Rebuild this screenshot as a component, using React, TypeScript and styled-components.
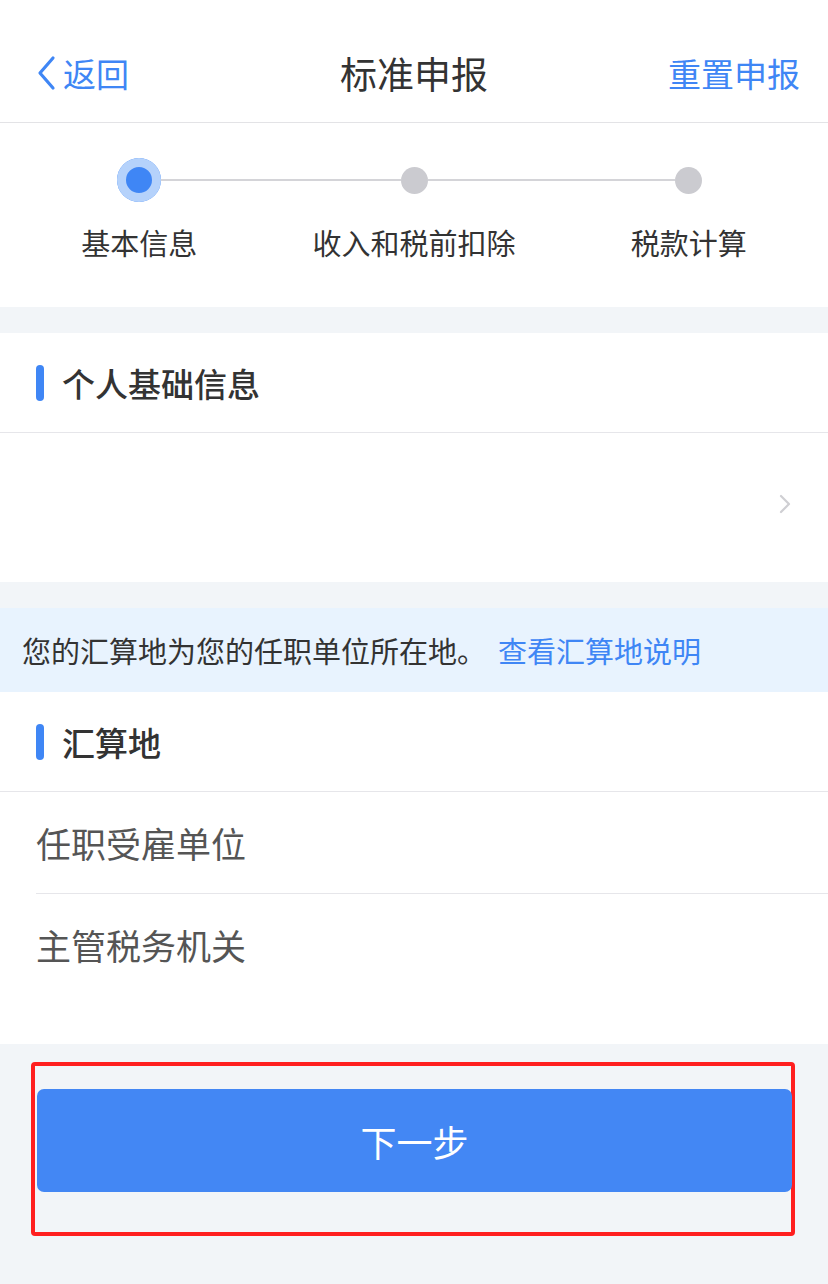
import React from "react";
import styled, { createGlobalStyle } from "styled-components";

const BLUE = "#3f86f5";

const GlobalStyle = createGlobalStyle`
  html, body {
    margin: 0;
    padding: 0;
    background: #f2f5f8;
  }
  body {
    font-family: "Noto Sans CJK SC", "Noto Sans", sans-serif;
    color: #333;
  }
  * {
    box-sizing: border-box;
  }
`;

const STEPS = [
  { id: 1, title: "基本信息", active: true },
  { id: 2, title: "收入和税前扣除", active: false },
  { id: 3, title: "税款计算", active: false },
];

const App = () => {
  return (
    <Page>
      <GlobalStyle />
      <NavBar>
        <BackLink>
          <svg width="22" height="36" viewBox="0 0 22 36">
            <path
              d="M18 3 L5 18 L18 33"
              fill="none"
              stroke={BLUE}
              strokeWidth="3.2"
              strokeLinecap="round"
              strokeLinejoin="round"
            />
          </svg>
          <span>返回</span>
        </BackLink>
        <NavTitle>标准申报</NavTitle>
        <NavAction>重置申报</NavAction>
      </NavBar>

      <Stepper>
        {STEPS.map((step, i) => (
          <Step key={step.id}>
            <Track>
              <Segment $hidden={i === 0} />
              <Dot $active={step.active} />
              <Segment $hidden={i === STEPS.length - 1} />
            </Track>
            <StepLabel>{step.title}</StepLabel>
          </Step>
        ))}
      </Stepper>

      <Card $gap={26}>
        <SectionHead>个人基础信息</SectionHead>
        <EmptyRow>
          <svg width="14" height="22" viewBox="0 0 14 22">
            <path
              d="M3 3 L11 11 L3 19"
              fill="none"
              stroke="#cfcfd3"
              strokeWidth="2.2"
              strokeLinecap="round"
              strokeLinejoin="round"
            />
          </svg>
        </EmptyRow>
      </Card>

      <Notice>
        您的汇算地为您的任职单位所在地。<NoticeLink>查看汇算地说明</NoticeLink>
      </Notice>

      <Card $gap={0}>
        <SectionHead>汇算地</SectionHead>
        <List>
          <ListRow>任职受雇单位</ListRow>
          <ListRow>主管税务机关</ListRow>
        </List>
      </Card>

      <Footer>
        <Highlight>
          <NextButton>下一步</NextButton>
        </Highlight>
      </Footer>
    </Page>
  );
};

export default App;

const Page = styled.div`
  width: 828px;
  min-height: 1284px;
  background: #f2f5f8;
  display: flex;
  flex-direction: column;
`;

const NavBar = styled.header`
  height: 123px;
  padding: 24px 28px 0 35px;
  background: #fff;
  border-bottom: 1px solid #e3e3e6;
  display: flex;
  align-items: center;
  justify-content: space-between;
  position: relative;
`;

const BackLink = styled.div`
  display: flex;
  align-items: center;
  gap: 6px;
  color: ${BLUE};
  font-size: 33px;
  line-height: 1;
  svg {
    display: block;
  }
`;

const NavTitle = styled.h1`
  margin: 0;
  font-size: 37px;
  font-weight: 400;
  color: #333;
  line-height: 1;
  position: absolute;
  left: 50%;
  top: calc(24px + 49px);
  transform: translate(-50%, -50%);
`;

const NavAction = styled.div`
  color: ${BLUE};
  font-size: 33px;
  line-height: 1;
`;

const Stepper = styled.section`
  background: #fff;
  padding: 35px 2px 45px;
  display: grid;
  grid-template-columns: repeat(3, 1fr);
  margin-bottom: 26px;
`;

const Step = styled.div`
  display: flex;
  flex-direction: column;
  align-items: center;
  gap: 20px;
`;

const Track = styled.div`
  width: 100%;
  height: 44px;
  display: flex;
  align-items: center;
`;

const Segment = styled.div<{ $hidden: boolean }>`
  flex: 1;
  height: 2px;
  background: ${(p) => (p.$hidden ? "transparent" : "#d4d4d8")};
`;

const Dot = styled.div<{ $active: boolean }>`
  flex: none;
  width: ${(p) => (p.$active ? "44px" : "27px")};
  height: ${(p) => (p.$active ? "44px" : "27px")};
  border-radius: 50%;
  background: ${(p) => (p.$active ? BLUE : "#cbcbd0")};
  box-shadow: ${(p) => (p.$active ? "inset 0 0 0 9px #b5d2fb" : "none")};
`;

const StepLabel = styled.div`
  font-size: 29px;
  line-height: 40px;
  color: #333;
  white-space: nowrap;
`;

const Card = styled.section<{ $gap: number }>`
  background: #fff;
  margin-bottom: ${(p) => p.$gap}px;
`;

const SectionHead = styled.h2`
  margin: 0;
  height: 100px;
  padding-left: 36px;
  border-bottom: 1px solid #e6e6ea;
  display: flex;
  align-items: center;
  gap: 18px;
  font-size: 33px;
  font-weight: 500;
  color: #333;
  &::before {
    content: "";
    width: 8px;
    height: 36px;
    border-radius: 4px;
    background: ${BLUE};
  }
`;

const EmptyRow = styled.div`
  height: 149px;
  padding: 0 36px 8px 0;
  display: flex;
  align-items: center;
  justify-content: flex-end;
`;

const Notice = styled.div`
  height: 84px;
  padding-left: 22px;
  background: #e8f3fe;
  display: flex;
  align-items: center;
  font-size: 29px;
  color: #333;
  white-space: nowrap;
`;

const NoticeLink = styled.span`
  margin-left: 12px;
  color: ${BLUE};
`;

const List = styled.div`
  padding-left: 36px;
  padding-bottom: 50px;
`;

const ListRow = styled.div`
  height: 101px;
  display: flex;
  align-items: center;
  font-size: 35px;
  color: #555;
  & + & {
    border-top: 1px solid #e6e6ea;
  }
`;

const Footer = styled.footer`
  flex: 1;
  padding: 18px 33px 0 31px;
`;

const Highlight = styled.div`
  border: 4px solid #ff1f1f;
  border-radius: 4px;
  padding: 23px 0 40px 2px;
`;

const NextButton = styled.button`
  display: block;
  width: 755px;
  height: 103px;
  border: none;
  border-radius: 7px;
  background: #4387f4;
  color: #fff;
  font-family: inherit;
  font-size: 36px;
`;
